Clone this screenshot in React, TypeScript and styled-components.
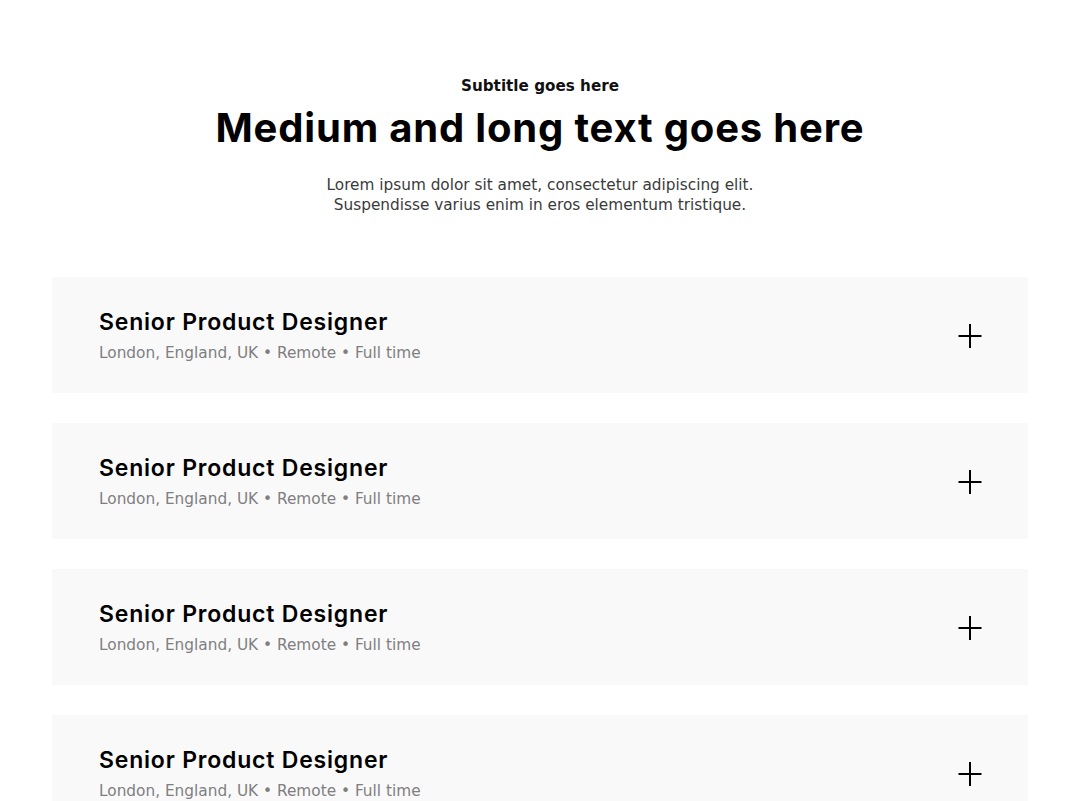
import React from "react";
import styled, { createGlobalStyle } from "styled-components";

const Global = createGlobalStyle`
  html, body { margin: 0; padding: 0; background: #ffffff; }
  body { font-family: "DejaVu Sans", sans-serif; color: #000; }
  * { box-sizing: border-box; }
`;

const Page = styled.main`
  padding: 77px 52px 0;
`;

const Header = styled.header`
  display: flex;
  flex-direction: column;
  align-items: center;
  text-align: center;
  margin-bottom: 62px;
`;

const Eyebrow = styled.p`
  margin: 0 0 9px;
  font-family: "DejaVu Sans", sans-serif;
  font-weight: 700;
  font-size: 15.2px;
  line-height: 18px;
  color: #111;
`;

const Title = styled.h1`
  margin: 0 0 23px;
  font-family: Inter, "DejaVu Sans", sans-serif;
  font-weight: 700;
  font-size: 40px;
  line-height: 48px;
  letter-spacing: 0.82px;
  color: #000;
`;

const Lead = styled.p`
  margin: 0;
  font-family: "DejaVu Sans", sans-serif;
  font-size: 15.3px;
  line-height: 20px;
  color: #3a3a3a;
`;

const List = styled.div`
  display: flex;
  flex-direction: column;
  gap: 30px;
`;

const Card = styled.div`
  display: flex;
  align-items: center;
  justify-content: space-between;
  height: 116px;
  padding: 0 45px 0 47px;
  background: #f9f9fa;
`;

const Info = styled.div`
  display: flex;
  flex-direction: column;
  gap: 7px;
`;

const JobTitle = styled.h3`
  margin: 0;
  font-family: Inter, "DejaVu Sans", sans-serif;
  font-weight: 600;
  font-size: 23px;
  line-height: 28px;
  letter-spacing: 0.8px;
  color: #000;
`;

const Meta = styled.p`
  margin: 0;
  font-family: "DejaVu Sans", sans-serif;
  font-size: 15.33px;
  line-height: 20px;
  color: #7f7f7f;
`;

const Toggle = styled.button`
  display: flex;
  align-items: center;
  justify-content: center;
  width: 26px;
  height: 26px;
  margin-top: 2px;
  padding: 0;
  border: 0;
  background: transparent;
  cursor: pointer;
`;

const Plus = () => (
  <svg width="26" height="26" viewBox="0 0 26 26" fill="none">
    <path d="M13 1V25M1.5 13H24.5" stroke="#000" strokeWidth="2" />
  </svg>
);

const jobs = [1, 2, 3, 4];

export default function App() {
  return (
    <>
      <Global />
      <Page>
        <Header>
          <Eyebrow>Subtitle goes here</Eyebrow>
          <Title>Medium and long text goes here</Title>
          <Lead>
            Lorem ipsum dolor sit amet, consectetur adipiscing elit.
            <br />
            Suspendisse varius enim in eros elementum tristique.
          </Lead>
        </Header>
        <List>
          {jobs.map((j) => (
            <Card key={j}>
              <Info>
                <JobTitle>Senior Product Designer</JobTitle>
                <Meta>London, England, UK • Remote • Full time</Meta>
              </Info>
              <Toggle aria-label="Expand">
                <Plus />
              </Toggle>
            </Card>
          ))}
        </List>
      </Page>
    </>
  );
}
